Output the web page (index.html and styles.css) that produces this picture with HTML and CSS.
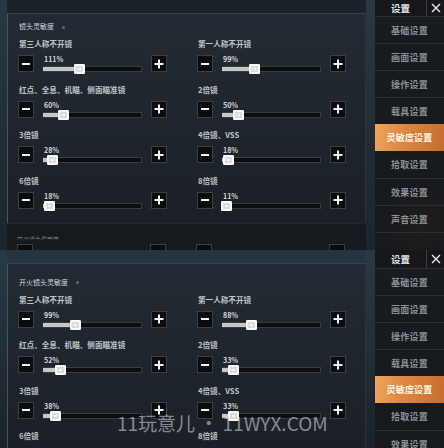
FILE: index.html
```html
<!DOCTYPE html>
<html lang="zh-CN">
<head>
    <meta charset="UTF-8">
    <meta name="viewport" content="width=device-width, initial-scale=1.0">
    <title>灵敏度设置</title>
    <link rel="stylesheet" href="styles.css">
</head>
<body>
<div class="screen">

    <!-- first capture: 镜头灵敏度 -->
    <section class="shot shot-a">
        <div class="main">
            <div class="topband"></div>
            <div class="panel">
                <div class="section-title">镜头灵敏度<span class="info"></span></div>
                <div class="grid">
                    <div class="field">
                        <div class="label">第三人称不开镜</div>
                        <div class="control">
                            <span class="btn"><svg viewBox="0 0 10 10" width="10" height="10"><path d="M1 5h8"/></svg></span>
                            <div class="slider"><span class="value">111%</span><div class="track"><div class="fill" style="width:37%"><span class="thumb"></span></div></div></div>
                            <span class="btn"><svg viewBox="0 0 10 10" width="10" height="10"><path d="M0.5 5h9M5 0.5v9"/></svg></span>
                        </div>
                    </div>
                    <div class="field">
                        <div class="label">第一人称不开镜</div>
                        <div class="control">
                            <span class="btn"><svg viewBox="0 0 10 10" width="10" height="10"><path d="M1 5h8"/></svg></span>
                            <div class="slider"><span class="value">99%</span><div class="track"><div class="fill" style="width:33%"><span class="thumb"></span></div></div></div>
                            <span class="btn"><svg viewBox="0 0 10 10" width="10" height="10"><path d="M0.5 5h9M5 0.5v9"/></svg></span>
                        </div>
                    </div>
                    <div class="field">
                        <div class="label">红点、全息、机瞄、侧面瞄准镜</div>
                        <div class="control">
                            <span class="btn"><svg viewBox="0 0 10 10" width="10" height="10"><path d="M1 5h8"/></svg></span>
                            <div class="slider"><span class="value">60%</span><div class="track"><div class="fill" style="width:20%"><span class="thumb"></span></div></div></div>
                            <span class="btn"><svg viewBox="0 0 10 10" width="10" height="10"><path d="M0.5 5h9M5 0.5v9"/></svg></span>
                        </div>
                    </div>
                    <div class="field">
                        <div class="label">2倍镜</div>
                        <div class="control">
                            <span class="btn"><svg viewBox="0 0 10 10" width="10" height="10"><path d="M1 5h8"/></svg></span>
                            <div class="slider"><span class="value">50%</span><div class="track"><div class="fill" style="width:16.7%"><span class="thumb"></span></div></div></div>
                            <span class="btn"><svg viewBox="0 0 10 10" width="10" height="10"><path d="M0.5 5h9M5 0.5v9"/></svg></span>
                        </div>
                    </div>
                    <div class="field">
                        <div class="label">3倍镜</div>
                        <div class="control">
                            <span class="btn"><svg viewBox="0 0 10 10" width="10" height="10"><path d="M1 5h8"/></svg></span>
                            <div class="slider"><span class="value">28%</span><div class="track"><div class="fill" style="width:9.3%"><span class="thumb"></span></div></div></div>
                            <span class="btn"><svg viewBox="0 0 10 10" width="10" height="10"><path d="M0.5 5h9M5 0.5v9"/></svg></span>
                        </div>
                    </div>
                    <div class="field">
                        <div class="label">4倍镜、VSS</div>
                        <div class="control">
                            <span class="btn"><svg viewBox="0 0 10 10" width="10" height="10"><path d="M1 5h8"/></svg></span>
                            <div class="slider"><span class="value">18%</span><div class="track"><div class="fill" style="width:6%"><span class="thumb"></span></div></div></div>
                            <span class="btn"><svg viewBox="0 0 10 10" width="10" height="10"><path d="M0.5 5h9M5 0.5v9"/></svg></span>
                        </div>
                    </div>
                    <div class="field">
                        <div class="label">6倍镜</div>
                        <div class="control">
                            <span class="btn"><svg viewBox="0 0 10 10" width="10" height="10"><path d="M1 5h8"/></svg></span>
                            <div class="slider"><span class="value">18%</span><div class="track"><div class="fill" style="width:6%"><span class="thumb"></span></div></div></div>
                            <span class="btn"><svg viewBox="0 0 10 10" width="10" height="10"><path d="M0.5 5h9M5 0.5v9"/></svg></span>
                        </div>
                    </div>
                    <div class="field">
                        <div class="label">8倍镜</div>
                        <div class="control">
                            <span class="btn"><svg viewBox="0 0 10 10" width="10" height="10"><path d="M1 5h8"/></svg></span>
                            <div class="slider"><span class="value">11%</span><div class="track"><div class="fill" style="width:3.7%"><span class="thumb"></span></div></div></div>
                            <span class="btn"><svg viewBox="0 0 10 10" width="10" height="10"><path d="M0.5 5h9M5 0.5v9"/></svg></span>
                        </div>
                    </div>
                </div>
            </div>
            <div class="next-strip">
                <div class="tiny-title">开火镜头灵敏度</div>
                <div class="grid">
                    <div class="control">
                        <span class="btn"></span>
                        <div class="slider"><span class="value"></span><div class="track"><div class="fill" style="width:5%"><span class="thumb"></span></div></div></div>
                        <span class="btn"></span>
                    </div>
                    <div class="control">
                        <span class="btn"></span>
                        <div class="slider"><span class="value"></span><div class="track"><div class="fill" style="width:4%"><span class="thumb"></span></div></div></div>
                        <span class="btn"></span>
                    </div>
                </div>
            </div>
        </div>
        <aside class="sidebar">
            <div class="side-head">
                <span class="side-title">设置</span>
                <span class="close"><svg viewBox="0 0 10 10" width="10" height="10"><path d="M1 1l8 8M9 1l-8 8"/></svg></span>
            </div>
            <div class="side-item">基础设置</div>
            <div class="side-item">画面设置</div>
            <div class="side-item">操作设置</div>
            <div class="side-item">载具设置</div>
            <div class="side-item active">灵敏度设置</div>
            <div class="side-item">拾取设置</div>
            <div class="side-item">效果设置</div>
            <div class="side-item">声音设置</div>
            <div class="side-item"></div>
        </aside>
    </section>

    <!-- second capture: 开火镜头灵敏度 -->
    <section class="shot shot-b">
        <div class="main">
            <div class="topband"></div>
            <div class="panel">
                <div class="section-title">开火镜头灵敏度<span class="info"></span></div>
                <div class="grid">
                    <div class="field">
                        <div class="label">第三人称不开镜</div>
                        <div class="control">
                            <span class="btn"><svg viewBox="0 0 10 10" width="10" height="10"><path d="M1 5h8"/></svg></span>
                            <div class="slider"><span class="value">99%</span><div class="track"><div class="fill" style="width:33%"><span class="thumb"></span></div></div></div>
                            <span class="btn"><svg viewBox="0 0 10 10" width="10" height="10"><path d="M0.5 5h9M5 0.5v9"/></svg></span>
                        </div>
                    </div>
                    <div class="field">
                        <div class="label">第一人称不开镜</div>
                        <div class="control">
                            <span class="btn"><svg viewBox="0 0 10 10" width="10" height="10"><path d="M1 5h8"/></svg></span>
                            <div class="slider"><span class="value">88%</span><div class="track"><div class="fill" style="width:29.3%"><span class="thumb"></span></div></div></div>
                            <span class="btn"><svg viewBox="0 0 10 10" width="10" height="10"><path d="M0.5 5h9M5 0.5v9"/></svg></span>
                        </div>
                    </div>
                    <div class="field">
                        <div class="label">红点、全息、机瞄、侧面瞄准镜</div>
                        <div class="control">
                            <span class="btn"><svg viewBox="0 0 10 10" width="10" height="10"><path d="M1 5h8"/></svg></span>
                            <div class="slider"><span class="value">52%</span><div class="track"><div class="fill" style="width:17.3%"><span class="thumb"></span></div></div></div>
                            <span class="btn"><svg viewBox="0 0 10 10" width="10" height="10"><path d="M0.5 5h9M5 0.5v9"/></svg></span>
                        </div>
                    </div>
                    <div class="field">
                        <div class="label">2倍镜</div>
                        <div class="control">
                            <span class="btn"><svg viewBox="0 0 10 10" width="10" height="10"><path d="M1 5h8"/></svg></span>
                            <div class="slider"><span class="value">33%</span><div class="track"><div class="fill" style="width:11%"><span class="thumb"></span></div></div></div>
                            <span class="btn"><svg viewBox="0 0 10 10" width="10" height="10"><path d="M0.5 5h9M5 0.5v9"/></svg></span>
                        </div>
                    </div>
                    <div class="field">
                        <div class="label">3倍镜</div>
                        <div class="control">
                            <span class="btn"><svg viewBox="0 0 10 10" width="10" height="10"><path d="M1 5h8"/></svg></span>
                            <div class="slider"><span class="value">38%</span><div class="track"><div class="fill" style="width:12.7%"><span class="thumb"></span></div></div></div>
                            <span class="btn"><svg viewBox="0 0 10 10" width="10" height="10"><path d="M0.5 5h9M5 0.5v9"/></svg></span>
                        </div>
                    </div>
                    <div class="field">
                        <div class="label">4倍镜、VSS</div>
                        <div class="control">
                            <span class="btn"><svg viewBox="0 0 10 10" width="10" height="10"><path d="M1 5h8"/></svg></span>
                            <div class="slider"><span class="value">33%</span><div class="track"><div class="fill" style="width:11%"><span class="thumb"></span></div></div></div>
                            <span class="btn"><svg viewBox="0 0 10 10" width="10" height="10"><path d="M0.5 5h9M5 0.5v9"/></svg></span>
                        </div>
                    </div>
                    <div class="field">
                        <div class="label">6倍镜</div>
                    </div>
                    <div class="field">
                        <div class="label">8倍镜</div>
                    </div>
                </div>
            </div>
        </div>
        <aside class="sidebar">
            <div class="side-head">
                <span class="side-title">设置</span>
                <span class="close"><svg viewBox="0 0 10 10" width="10" height="10"><path d="M1 1l8 8M9 1l-8 8"/></svg></span>
            </div>
            <div class="side-item">基础设置</div>
            <div class="side-item">画面设置</div>
            <div class="side-item">操作设置</div>
            <div class="side-item">载具设置</div>
            <div class="side-item active">灵敏度设置</div>
            <div class="side-item">拾取设置</div>
            <div class="side-item">效果设置</div>
        </aside>
    </section>

    <div class="watermark">11玩意儿 • 11WYX.COM</div>
</div>
</body>
</html>
```

FILE: styles.css
```css
body {
    margin: 0;
    padding: 0;
    background: #101418;
    font-family: "Noto Sans CJK SC", "Noto Sans", sans-serif;
}
.screen {
    position: relative;
    width: 444px;
    height: 448px;
    overflow: hidden;
}
.shot {
    display: flex;
    overflow: hidden;
}
.shot-a {
    height: 250px;
    background:
        radial-gradient(circle at 420px 225px, rgba(150, 80, 30, 0.65), rgba(150, 80, 30, 0) 45px),
        radial-gradient(circle at 335px 242px, rgba(140, 75, 35, 0.6), rgba(140, 75, 35, 0) 25px),
        linear-gradient(180deg, #293843, #1b252d);
}
.shot-b {
    height: 198px;
    background: linear-gradient(180deg, #2a3945, #1a232b);
}
.main {
    flex: 1;
    display: flex;
    flex-direction: column;
}
.topband {
    height: 14px;
    margin-left: 7px;
    margin-right: 9px;
    background: #1b232a;
    border-bottom: 1px solid #34414b;
    box-sizing: border-box;
}
.shot-b .topband {
    height: 15px;
    background: #263440;
}
.panel {
    margin-left: 7px;
    margin-right: 9px;
    padding: 7px 0 0 10px;
    height: 209px;
    box-sizing: border-box;
    background: linear-gradient(180deg, #222b33, #1b2026);
    border-left: 1px solid #46545e;
    border-right: 1px solid #2b333b;
}
.shot-b .panel {
    padding-top: 13px;
    height: 200px;
}
.section-title {
    font-size: 7px;
    line-height: 10px;
    color: #cfd3d7;
    margin-bottom: 7px;
    padding-left: 1px;
}
.info {
    display: inline-block;
    width: 3px;
    height: 3px;
    margin-left: 8px;
    border-radius: 50%;
    background: #5e6870;
    vertical-align: middle;
}
.grid {
    display: grid;
    grid-template-columns: 149px 149px;
    column-gap: 30px;
    row-gap: 11.5px;
}
.label {
    font-size: 7.6px;
    line-height: 12px;
    font-weight: 700;
    color: #bfc4c8;
    padding-left: 1px;
    white-space: nowrap;
}
.control {
    display: flex;
    gap: 9px;
    height: 17px;
    margin-top: 5px;
}
.btn {
    width: 16px;
    flex: none;
    display: flex;
    align-items: center;
    justify-content: center;
    background: #0a0c0e;
    border: 1px solid #3a3f44;
    box-sizing: border-box;
}
.btn svg path {
    stroke: #f2f2f2;
    stroke-width: 2;
    fill: none;
}
.slider {
    flex: 1;
    display: flex;
    flex-direction: column;
}
.value {
    font-size: 7px;
    line-height: 9px;
    height: 9px;
    font-weight: 700;
    color: #d6d8da;
    padding-left: 1px;
}
.track {
    margin-top: 2px;
    height: 5px;
    background: #0b0d0f;
    border: 1px solid #383c41;
    border-left: none;
}
.fill {
    position: relative;
    height: 100%;
    background: #c6c7c8;
}
.thumb {
    position: absolute;
    right: -6px;
    top: -3px;
    width: 11px;
    height: 10px;
    border-radius: 2px;
    background: #f4f4f4;
    box-shadow: inset 0 0 0 2px #fafafa, inset 0 0 0 4px #dcdcdc;
}
.next-strip {
    margin-left: 7px;
    margin-right: 9px;
    height: 27px;
    padding: 11px 0 0 10px;
    box-sizing: border-box;
    overflow: hidden;
    background: #16191d;
    border-top: 1px solid #23292f;
}
.tiny-title {
    font-size: 6px;
    line-height: 6px;
    height: 6px;
    color: #8b9198;
    transform: scaleY(0.45);
    transform-origin: left center;
}
.next-strip .control {
    margin-top: 3px;
}
.sidebar {
    width: 69px;
    flex: none;
    display: flex;
    flex-direction: column;
    background: rgba(22, 24, 27, 0.88);
}
.side-head {
    height: 16px;
    flex: none;
    display: flex;
    background: #15171a;
}
.shot-b .side-head {
    height: 18px;
}
.side-title {
    flex: 1;
    display: flex;
    align-items: center;
    justify-content: center;
    font-size: 9.5px;
    font-weight: 700;
    color: #e4e6e8;
}
.close {
    width: 17px;
    display: flex;
    align-items: center;
    justify-content: center;
    border-left: 1px solid #3a3d42;
}
.close svg path {
    stroke: #ececec;
    stroke-width: 1.4;
    fill: none;
}
.side-item {
    height: 27px;
    flex: none;
    display: flex;
    align-items: center;
    justify-content: center;
    box-sizing: border-box;
    border-top: 1px solid #2b2e33;
    font-size: 9px;
    font-weight: 700;
    letter-spacing: 0.2px;
    color: #8d9196;
}
.side-item.active {
    border-top: none;
    color: #fff6ea;
    background: linear-gradient(100deg, #f0a65a 0%, #db8540 45%, #c76d2c 100%);
}
.side-item.active + .side-item {
    border-top: none;
}
.watermark {
    position: absolute;
    left: 117px;
    top: 410px;
    font-size: 19px;
    line-height: 26px;
    color: rgba(205, 205, 220, 0.62);
    white-space: nowrap;
}
```
